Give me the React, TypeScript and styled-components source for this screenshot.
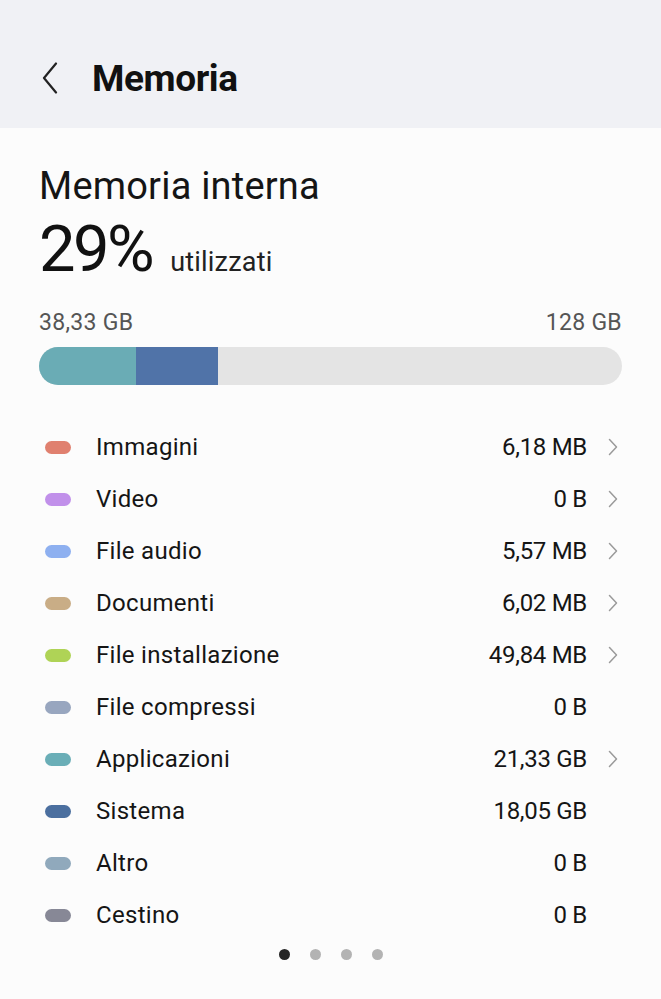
import React from 'react';
import styled, { createGlobalStyle } from 'styled-components';

const GlobalStyle = createGlobalStyle`
  html, body {
    margin: 0;
    padding: 0;
    background: #fcfcfc;
    font-family: Roboto, "Noto Sans", sans-serif;
    color: #111;
  }
`;

// storage categories
type Category = {
  label: string;
  size: string;
  color: string;
  link: boolean;
};

const categories: Category[] = [
  { label: 'Immagini', size: '6,18 MB', color: '#e0806f', link: true },
  { label: 'Video', size: '0 B', color: '#c190ea', link: true },
  { label: 'File audio', size: '5,57 MB', color: '#8eb0f0', link: true },
  { label: 'Documenti', size: '6,02 MB', color: '#c9ad86', link: true },
  { label: 'File installazione', size: '49,84 MB', color: '#afd356', link: true },
  { label: 'File compressi', size: '0 B', color: '#98a6bf', link: false },
  { label: 'Applicazioni', size: '21,33 GB', color: '#6aaeb7', link: true },
  { label: 'Sistema', size: '18,05 GB', color: '#4b6f9f', link: false },
  { label: 'Altro', size: '0 B', color: '#90a9bc', link: false },
  { label: 'Cestino', size: '0 B', color: '#878896', link: false },
];

const segments = [
  { color: '#6aacb5', width: 97 },
  { color: '#5073a8', width: 82 },
];

const Page = styled.div`
  width: 661px;
  min-height: 999px;
  background: #fcfcfc;
`;

const Header = styled.header`
  height: 128px;
  background: #f0f1f5;
  display: flex;
  align-items: center;
  padding: 28px 0 0 38px;
  box-sizing: border-box;
  gap: 30px;
`;

const BackButton = styled.button`
  border: none;
  background: none;
  padding: 0;
  width: 24px;
  height: 34px;
  display: flex;
  align-items: center;
  justify-content: center;
`;

const HeaderTitle = styled.h1`
  margin: 0;
  font-size: 37px;
  font-weight: 700;
  letter-spacing: -0.4px;
  color: #111;
`;

const Content = styled.main`
  padding: 36px 39px 0 39px;
`;

const SectionTitle = styled.h2`
  margin: 0;
  font-size: 38px;
  font-weight: 400;
  line-height: 44px;
  color: #151515;
  letter-spacing: 0.2px;
`;

const UsageLine = styled.div`
  display: flex;
  align-items: baseline;
  gap: 18px;
  margin-top: 6px;
`;

const Percent = styled.span`
  font-size: 65px;
  font-weight: 400;
  line-height: 70px;
  letter-spacing: -2.5px;
  color: #111;
`;

const UsageLabel = styled.span`
  font-size: 27px;
  color: #222;
  letter-spacing: 0.2px;
`;

const Limits = styled.div`
  display: flex;
  justify-content: space-between;
  margin-top: 26px;
  font-size: 23px;
  color: #555;
  line-height: 26px;
  letter-spacing: 0.3px;
`;

const Bar = styled.div`
  margin-top: 11px;
  height: 38px;
  border-radius: 19px;
  background: #e4e4e4;
  overflow: hidden;
  display: flex;
`;

const BarSegment = styled.div<{ $color: string }>`
  height: 100%;
  background: ${p => p.$color};
`;

const Legend = styled.ul`
  list-style: none;
  margin: 36px 0 0 0;
  padding: 0;
`;

const Row = styled.li`
  display: flex;
  align-items: center;
  height: 52px;
`;

const Swatch = styled.span<{ $color: string }>`
  width: 26px;
  height: 13px;
  border-radius: 7px;
  background: ${p => p.$color};
  margin-left: 6px;
  margin-right: 25px;
  flex-shrink: 0;
`;

const Label = styled.span`
  flex: 1;
  font-size: 24px;
  color: #151515;
  letter-spacing: 0.3px;
`;

const Size = styled.span`
  font-size: 24px;
  color: #151515;
  text-align: right;
  letter-spacing: -0.3px;
`;

const ChevronSlot = styled.span`
  width: 35px;
  display: flex;
  justify-content: flex-end;
  align-items: center;
  padding-right: 4px;
  box-sizing: border-box;
`;

const Pager = styled.div`
  display: flex;
  justify-content: center;
  gap: 20px;
  margin-top: 8px;
`;

const PagerDot = styled.span<{ $active: boolean }>`
  width: 11px;
  height: 11px;
  border-radius: 50%;
  background: ${p => (p.$active ? '#262626' : '#b3b3b3')};
`;

const BackIcon = () => (
  <svg width="20" height="32" viewBox="0 0 20 32" fill="none">
    <path d="M16 1.5 L4 16 L16 30.5" stroke="#222" strokeWidth="2.2" strokeLinecap="round" strokeLinejoin="round" />
  </svg>
);

const ChevronIcon = () => (
  <svg width="10" height="18" viewBox="0 0 10 18" fill="none">
    <path d="M1.5 1.5 L8.5 9 L1.5 16.5" stroke="#9a9a9a" strokeWidth="1.5" strokeLinecap="round" strokeLinejoin="round" />
  </svg>
);

export default function App() {
  return (
    <>
      <GlobalStyle />
      <Page>
        <Header>
          <BackButton aria-label="Indietro">
            <BackIcon />
          </BackButton>
          <HeaderTitle>Memoria</HeaderTitle>
        </Header>
        <Content>
          <SectionTitle>Memoria interna</SectionTitle>
          <UsageLine>
            <Percent>29%</Percent>
            <UsageLabel>utilizzati</UsageLabel>
          </UsageLine>
          <Limits>
            <span>38,33 GB</span>
            <span>128 GB</span>
          </Limits>
          <Bar>
            {segments.map((s, i) => (
              <BarSegment key={i} $color={s.color} style={{ width: s.width }} />
            ))}
          </Bar>
          <Legend>
            {categories.map(c => (
              <Row key={c.label}>
                <Swatch $color={c.color} />
                <Label>{c.label}</Label>
                <Size>{c.size}</Size>
                <ChevronSlot>{c.link && <ChevronIcon />}</ChevronSlot>
              </Row>
            ))}
          </Legend>
          <Pager>
            {[0, 1, 2, 3].map(i => (
              <PagerDot key={i} $active={i === 0} />
            ))}
          </Pager>
        </Content>
      </Page>
    </>
  );
}
